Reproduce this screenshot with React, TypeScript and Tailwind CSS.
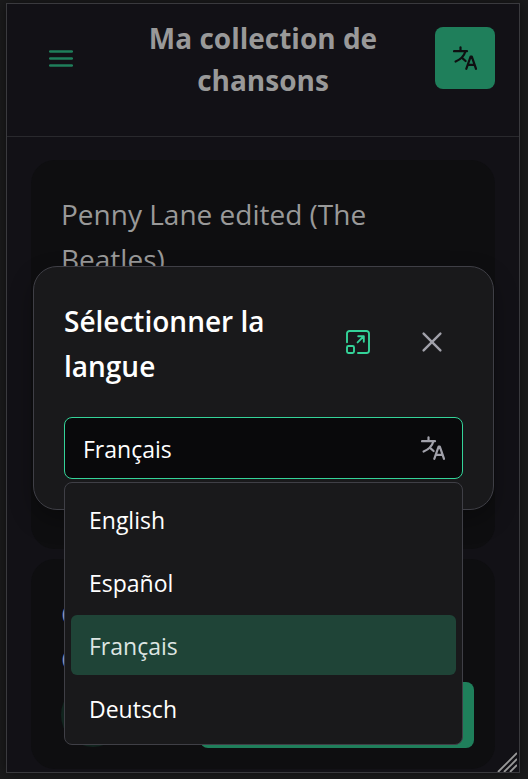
import { useState } from "react";

const languages = ["English", "Español", "Français", "Deutsch"];

function LanguageIcon() {
  return (
    <svg className="size-6" viewBox="0 0 24 24" fill="none" stroke="currentColor" strokeWidth="2.2" strokeLinecap="round" strokeLinejoin="round" aria-hidden="true">
      <path d="M1 5.2H14" />
      <path d="M7.5 1.4V5" />
      <path d="M12.3 5.4C11.2 9.8 7.2 13.4 2.6 15.6" />
      <path d="M9.6 12.4L12.6 15" />
      <path d="M13.3 22.8L17.6 10.6H18.8L23 22.8M14.8 18.9H21.4" />
    </svg>
  );
}

function MenuIcon() {
  return (
    <svg className="size-6" viewBox="0 0 24 24" fill="none" stroke="currentColor" strokeWidth="2.6" strokeLinecap="round" aria-hidden="true">
      <path d="M1.2 5.5H22.8M1.2 12.5H22.8M1.2 19.5H22.8" />
    </svg>
  );
}

function MaximizeIcon() {
  return (
    <svg className="size-6" viewBox="0 0 24 24" fill="none" stroke="currentColor" strokeWidth="1.9" strokeLinecap="round" strokeLinejoin="round" aria-hidden="true">
      <path d="M1 12.2V3.5A2.5 2.5 0 0 1 3.5 1H20.5A2.5 2.5 0 0 1 23 3.5V20.5A2.5 2.5 0 0 1 20.5 23H12" />
      <rect x="1" y="16" width="7" height="7" rx="1.4" />
      <path d="M11.6 12.4L17.8 6.2M12.2 6.2H17.8V11.8" />
    </svg>
  );
}

function CloseIcon() {
  return (
    <svg className="size-6" viewBox="0 0 24 24" fill="none" stroke="currentColor" strokeWidth="2.4" strokeLinecap="round" aria-hidden="true">
      <path d="M3.6 3.6L20.4 20.4M20.4 3.6L3.6 20.4" />
    </svg>
  );
}

function ResizeGrip() {
  return (
    <svg className="absolute right-0.5 bottom-0 size-5" viewBox="0 0 20 20" fill="none" stroke="#999999" strokeWidth="1.8" aria-hidden="true">
      <path d="M1 20L20 1M7 20L20 7M13 20L20 13" />
    </svg>
  );
}

function LanguagePicker() {
  const [selected, setSelected] = useState("Français");
  return (
    <div className="relative">
      <div className="relative">
        <input
          type="text"
          role="combobox"
          aria-labelledby="dialog-title"
          aria-controls="language-list"
          aria-expanded="true"
          readOnly
          value={selected}
          className="block h-[62px] w-full rounded-lg border border-[#34d399] bg-[#09090b] pt-0.5 pr-12 pl-[18px] text-[23px] text-white outline-none"
        />
        <span className="pointer-events-none absolute inset-y-0 right-[18px] flex items-center text-[#a1a1aa]">
          <LanguageIcon />
        </span>
      </div>
      <ul id="language-list" role="listbox" className="absolute inset-x-0 top-full mt-[3px] flex flex-col gap-[3px] rounded-lg border border-[#3f3f46] bg-[#19191b] p-1.5">
        {languages.map((name) => (
          <li key={name} role="option" aria-selected={name === selected}>
            <button
              type="button"
              onClick={() => setSelected(name)}
              className={`flex h-[60px] w-full items-center rounded-md px-[18px] pt-0.5 text-[23px] ${name === selected ? "bg-[#1f4437] text-[#dde5e2]" : "text-white"}`}
            >
              {name}
            </button>
          </li>
        ))}
      </ul>
    </div>
  );
}

export default function App() {
  return (
    <div className="flex min-h-screen bg-[#1b1b1c] pt-[3px] pr-2 pb-1.5 pl-1.5 font-['Open_Sans','Noto_Sans',sans-serif]">
      <div className="relative flex flex-1 flex-col overflow-hidden border border-[#3a3a3e] bg-[#121116] shadow-[0_0_12px_rgba(0,0,0,0.5)]">
        <header className="flex items-start border-b border-[#29292d] px-6 pt-[13px] pb-[35px]">
          <button type="button" aria-label="Menu" className="mt-2.5 flex h-[62px] w-15 items-center justify-center text-[#1f7f5b]">
            <MenuIcon />
          </button>
          <h1 className="flex-1 px-6 text-center text-[28px] leading-[42px] font-bold text-[#999999]">Ma collection de chansons</h1>
          <button type="button" aria-label="Langue" className="mt-2.5 flex h-[62px] w-15 items-center justify-center rounded-lg bg-[#1f7f5b] text-[#0f0f11]">
            <LanguageIcon />
          </button>
        </header>

        <main className="flex flex-col gap-2.5 px-6 pt-[23px]">
          <article className="min-h-[389px] rounded-3xl bg-[#0e0e10] px-[30px] py-8">
            <h2 className="text-[28px] leading-[45px] text-[#999999]">Penny Lane edited (The Beatles)</h2>
          </article>
          <article className="flex flex-col rounded-3xl bg-[#0e0e10] px-[30px] pt-[33px] pb-[21px]">
            <h2 className="text-[28px] leading-[45px] text-[#8f92b8]">O<br />O</h2>
            <div className="-mr-[9px] flex items-center justify-between">
              <span className="size-16 rounded-full bg-[#11241e]" />
              <button type="button" aria-label="Ouvrir" className="h-[66px] w-[274px] rounded-lg bg-[#1f7f5b]" />
            </div>
          </article>
        </main>
        <ResizeGrip />

        <div className="absolute inset-0 flex items-center justify-center pr-[25px] pl-[26px]">
          <section role="dialog" aria-modal="true" aria-labelledby="dialog-title" className="w-full rounded-3xl border border-[#3f3f46] bg-[#19191b] p-[30px] shadow-[0_10px_24px_rgba(0,0,0,0.3)]">
            <div className="mb-[30px] flex items-center">
              <h2 id="dialog-title" className="-mb-0.5 flex-1 pt-0.5 pr-6 text-[28px] leading-[45px] font-semibold text-white">Sélectionner la langue</h2>
              <button type="button" aria-label="Agrandir" className="flex size-[62px] items-center justify-center text-[#34d399]">
                <MaximizeIcon />
              </button>
              <button type="button" aria-label="Fermer" className="ml-3 flex size-[62px] items-center justify-center text-[#a1a1aa]">
                <CloseIcon />
              </button>
            </div>
            <LanguagePicker />
          </section>
        </div>
      </div>
    </div>
  );
}
